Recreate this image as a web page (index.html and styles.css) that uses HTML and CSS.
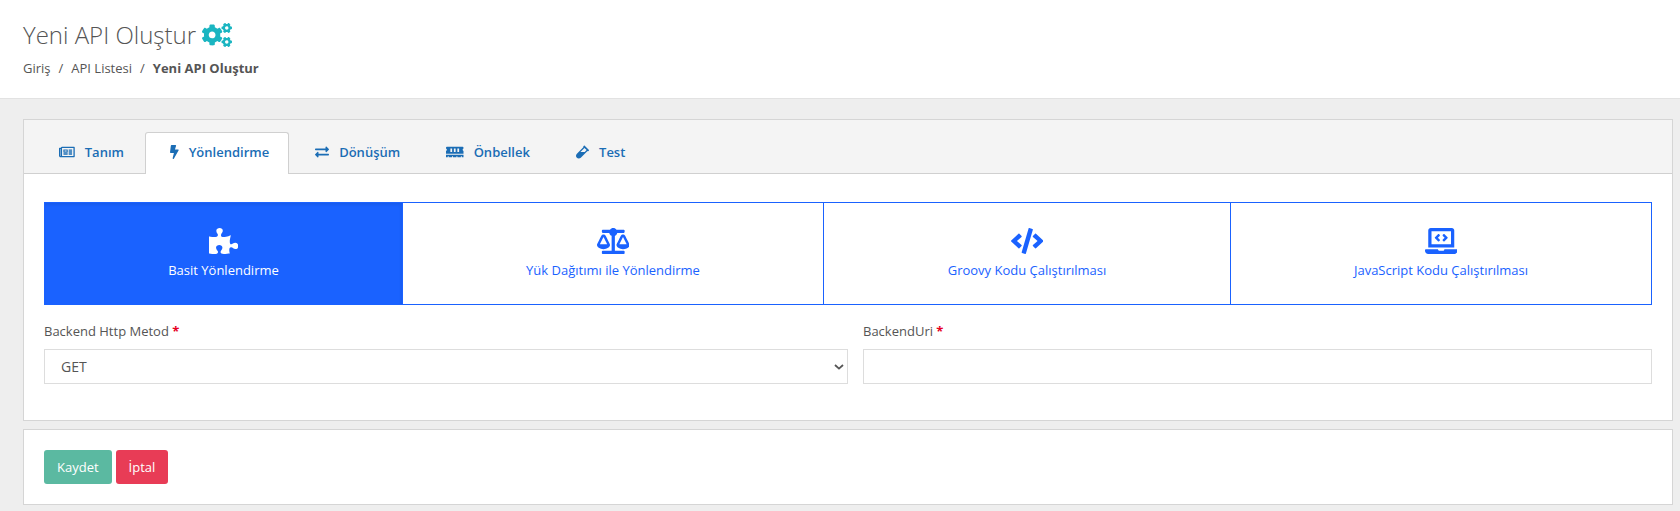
FILE: index.html
```html
<!DOCTYPE html>
<html lang="tr">

<head>
    <meta charset="UTF-8">
    <meta name="viewport" content="width=device-width, initial-scale=1.0">
    <title>Yeni API Oluştur</title>
    <link rel="stylesheet" href="styles.css">
</head>

<body>
    <header class="page-header">
        <h1 class="page-title">
            Yeni API Oluştur
            <svg class="title-icon" viewBox="0 0 640 512"><path d="M512.1 191l-8.2 14.3c-3 5.3-9.4 7.5-15.1 5.4-11.8-4.4-22.6-10.7-32.1-18.6-4.6-3.8-5.8-10.5-2.8-15.7l8.2-14.3c-6.9-8-12.3-17.3-15.9-27.4h-16.5c-6 0-11.2-4.3-12.2-10.3-2-12-2.1-24.6 0-37.1 1-6 6.2-10.4 12.2-10.4h16.5c3.6-10.1 9-19.4 15.9-27.4l-8.2-14.3c-3-5.2-1.9-11.9 2.8-15.7 9.5-7.9 20.4-14.2 32.1-18.6 5.7-2.1 12.1.1 15.1 5.4l8.2 14.3c10.5-1.9 21.2-1.9 31.7 0L552 6.3c3-5.3 9.4-7.5 15.1-5.4 11.8 4.4 22.6 10.7 32.1 18.6 4.6 3.8 5.8 10.5 2.8 15.7l-8.2 14.3c6.9 8 12.3 17.3 15.9 27.4h16.5c6 0 11.2 4.3 12.2 10.3 2 12 2.1 24.6 0 37.1-1 6-6.2 10.4-12.2 10.4h-16.5c-3.6 10.1-9 19.4-15.9 27.4l8.2 14.3c3 5.2 1.9 11.9-2.8 15.7-9.5 7.9-20.4 14.2-32.1 18.6-5.7 2.1-12.1-.1-15.1-5.4l-8.2-14.3c-10.4 1.9-21.2 1.9-31.7 0zm-10.5-58.8c38.5 29.6 82.4-14.3 52.8-52.8-38.5-29.7-82.4 14.3-52.8 52.8zM386.3 286.1l33.7 16.8c10.1 5.8 14.5 18.1 10.5 29.1-8.9 24.2-26.4 46.4-42.6 65.8-7.4 8.9-20.2 11.1-30.3 5.3l-29.1-16.8c-16 13.7-34.6 24.6-54.9 31.7v33.6c0 11.6-8.3 21.6-19.7 23.6-24.6 4.2-50.4 4.4-75.9 0-11.5-2-20-11.9-20-23.6V418c-20.3-7.2-38.9-18-54.9-31.7L74 403c-10 5.8-22.9 3.6-30.3-5.3-16.2-19.4-33.3-41.6-42.2-65.7-4-10.9.4-23.2 10.5-29.1l33.3-16.8c-3.9-20.9-3.9-42.4 0-63.4L12 205.8c-10.1-5.8-14.6-18.1-10.5-29 8.9-24.2 26-46.4 42.2-65.8 7.4-8.9 20.2-11.1 30.3-5.3l29.1 16.8c16-13.7 34.6-24.6 54.9-31.7V57.1c0-11.5 8.2-21.5 19.6-23.5 24.6-4.2 50.5-4.4 76-.1 11.5 2 20 11.9 20 23.6v33.6c20.3 7.2 38.9 18 54.9 31.7l29.1-16.8c10-5.8 22.9-3.6 30.3 5.3 16.2 19.4 33.2 41.6 42.1 65.8 4 10.9.1 23.2-10 29.1l-33.7 16.8c3.9 21 3.9 42.5 0 63.5zm-117.6 21.1c59.2-77-28.7-164.9-105.7-105.7-59.2 77 28.7 164.9 105.7 105.7zm243.4 182.7l-8.2 14.3c-3 5.3-9.4 7.5-15.1 5.4-11.8-4.4-22.6-10.7-32.1-18.6-4.6-3.8-5.8-10.5-2.8-15.7l8.2-14.3c-6.9-8-12.3-17.3-15.9-27.4h-16.5c-6 0-11.2-4.3-12.2-10.3-2-12-2.1-24.6 0-37.1 1-6 6.2-10.4 12.2-10.4h16.5c3.6-10.1 9-19.4 15.9-27.4l-8.2-14.3c-3-5.2-1.9-11.9 2.8-15.7 9.5-7.9 20.4-14.2 32.1-18.6 5.7-2.1 12.1.1 15.1 5.4l8.2 14.3c10.5-1.9 21.2-1.9 31.7 0l8.2-14.3c3-5.3 9.4-7.5 15.1-5.4 11.8 4.4 22.6 10.7 32.1 18.6 4.6 3.8 5.8 10.5 2.8 15.7l-8.2 14.3c6.9 8 12.3 17.3 15.9 27.4h16.5c6 0 11.2 4.3 12.2 10.3 2 12 2.1 24.6 0 37.1-1 6-6.2 10.4-12.2 10.4h-16.5c-3.6 10.1-9 19.4-15.9 27.4l8.2 14.3c3 5.2 1.9 11.9-2.8 15.7-9.5 7.9-20.4 14.2-32.1 18.6-5.7 2.1-12.1-.1-15.1-5.4l-8.2-14.3c-10.4 1.9-21.2 1.9-31.7 0zM501.6 431c38.5 29.6 82.4-14.3 52.8-52.8-38.5-29.6-82.4 14.3-52.8 52.8z"/></svg>
        </h1>
        <nav class="breadcrumb">
            <a>Giriş</a>
            <span class="sep">/</span>
            <a>API Listesi</a>
            <span class="sep">/</span>
            <strong>Yeni API Oluştur</strong>
        </nav>
    </header>

    <main class="page-content">
        <section class="card">
            <ul class="tabs">
                <li class="tab">
                    <svg class="tab-icon" viewBox="0 0 576 512"><path d="M552 64H112c-20.858 0-38.643 13.377-45.248 32H24c-13.255 0-24 10.745-24 24v272c0 30.928 25.072 56 56 56h496c13.255 0 24-10.745 24-24V88c0-13.255-10.745-24-24-24zM48 392V144h16v248c0 4.411-3.589 8-8 8s-8-3.589-8-8zm480 8H111.422c.374-2.614.578-5.283.578-8V112h416v288zM172 280h136c6.627 0 12-5.373 12-12v-96c0-6.627-5.373-12-12-12H172c-6.627 0-12 5.373-12 12v96c0 6.627 5.373 12 12 12zm28-80h80v40h-80v-40zm-40 140v-24c0-6.627 5.373-12 12-12h136c6.627 0 12 5.373 12 12v24c0 6.627-5.373 12-12 12H172c-6.627 0-12-5.373-12-12zm192 0v-24c0-6.627 5.373-12 12-12h104c6.627 0 12 5.373 12 12v24c0 6.627-5.373 12-12 12H364c-6.627 0-12-5.373-12-12zm0-144v-24c0-6.627 5.373-12 12-12h104c6.627 0 12 5.373 12 12v24c0 6.627-5.373 12-12 12H364c-6.627 0-12-5.373-12-12zm0 72v-24c0-6.627 5.373-12 12-12h104c6.627 0 12 5.373 12 12v24c0 6.627-5.373 12-12 12H364c-6.627 0-12-5.373-12-12z"/></svg>
                    Tanım
                </li>
                <li class="tab active">
                    <svg class="tab-icon" viewBox="0 0 320 512"><path d="M296 160H180.6l42.6-129.8C227.2 15 215.7 0 200 0H56C44 0 33.8 8.9 32.2 20.8l-32 240C-1.7 275.2 9.5 288 24 288h118.7L96.6 482.5c-3.6 15.2 8 29.5 23.3 29.5 8.4 0 16.4-4.4 20.8-12l176-304c9.3-15.9-2.2-36-20.7-36z"/></svg>
                    Yönlendirme
                </li>
                <li class="tab">
                    <svg class="tab-icon" viewBox="0 0 512 512"><path d="M0 168v-16c0-13.255 10.745-24 24-24h360V80c0-21.367 25.899-32.042 40.971-16.971l80 80c9.372 9.373 9.372 24.569 0 33.941l-80 80C409.956 271.982 384 261.456 384 240v-48H24c-13.255 0-24-10.745-24-24zm488 152H128v-48c0-21.314-25.862-32.08-40.971-16.971l-80 80c-9.372 9.373-9.372 24.569 0 33.941l80 80C102.057 463.997 128 453.437 128 432v-48h360c13.255 0 24-10.745 24-24v-16c0-13.255-10.745-24-24-24z"/></svg>
                    Dönüşüm
                </li>
                <li class="tab">
                    <svg class="tab-icon" viewBox="0 0 640 512"><path d="M640 130.94V96c0-17.67-14.33-32-32-32H32C14.33 64 0 78.33 0 96v34.94c18.6 6.61 32 24.19 32 45.06s-13.4 38.45-32 45.06V320h640v-98.94c-18.6-6.61-32-24.19-32-45.06s13.4-38.45 32-45.06zM224 256h-64V128h64v128zm128 0h-64V128h64v128zm128 0h-64V128h64v128zM0 448h64v-26.67c0-8.84 7.16-16 16-16s16 7.16 16 16V448h128v-26.67c0-8.84 7.16-16 16-16s16 7.16 16 16V448h128v-26.67c0-8.84 7.16-16 16-16s16 7.16 16 16V448h128v-26.67c0-8.84 7.16-16 16-16s16 7.16 16 16V448h64v-96H0v96z"/></svg>
                    Önbellek
                </li>
                <li class="tab">
                    <svg class="tab-icon" viewBox="0 0 480 512"><path d="M477.7 186.1L309.5 18.3c-3.1-3.1-8.2-3.1-11.3 0l-34 33.9c-3.1 3.1-3.1 8.2 0 11.3l11.2 11.1L33 316.5c-38.8 38.7-45.1 102-9.4 143.5 20.6 24 49.5 36 78.4 35.9 26.4 0 52.8-10 72.9-30.1l246.3-245.7 11.2 11.1c3.1 3.1 8.2 3.1 11.3 0l34-33.9c3.1-3 3.1-8.1 0-11.2zM318 256H161l148-147.7 78.5 78.3L318 256z"/></svg>
                    Test
                </li>
            </ul>

            <div class="tab-body">
                <div class="route-types">
                    <div class="route-type active">
                        <svg class="route-icon" viewBox="0 0 576 512"><path d="M519.442 288.651c-41.519 0-59.5 31.593-82.058 31.593C377.409 320.244 432 144 432 144s-196.288 80-196.288-3.297c0-35.827 36.288-46.25 36.288-85.985C272 19.216 243.885 0 210.539 0c-34.654 0-66.366 18.891-66.366 56.346 0 41.364 31.711 59.277 31.711 81.75C175.885 207.719 0 166.758 0 166.758v333.237s178.635 41.047 178.635-28.662c0-22.473-40-40.107-40-81.471 0-37.456 29.25-56.346 63.577-56.346 33.673 0 61.788 19.216 61.788 54.717 0 39.735-36.288 50.158-36.288 85.985 0 60.803 129.675 25.73 181.23 25.73 0 0-34.725-120.101 25.827-120.101 35.962 0 46.423 36.152 86.308 36.152C556.712 416 576 387.99 576 354.443c0-34.199-18.962-65.792-56.558-65.792z"/></svg>
                        <span>Basit Yönlendirme</span>
                    </div>
                    <div class="route-type">
                        <svg class="route-icon" viewBox="0 0 640 512"><path d="M256 336h-.02c0-16.18 1.34-8.73-85.05-181.51-17.65-35.29-68.19-35.36-85.87 0C-2.06 328.75.02 320.33.02 336H0c0 44.18 57.31 80 128 80s128-35.82 128-80zM128 176l72 144H56l72-144zm511.98 160c0-16.18 1.34-8.73-85.05-181.51-17.65-35.29-68.19-35.36-85.87 0-87.12 174.26-85.04 165.84-85.04 181.51H384c0 44.18 57.31 80 128 80s128-35.82 128-80h-.02zM440 320l72-144 72 144H440zm88 128H352V153.25c23.51-10.29 41.16-31.48 46.39-57.25H528c8.84 0 16-7.16 16-16V48c0-8.84-7.16-16-16-16H383.64C369.04 12.68 346.09 0 320 0s-49.04 12.68-63.64 32H112c-8.84 0-16 7.16-16 16v32c0 8.84 7.16 16 16 16h129.61c5.23 25.76 22.87 46.96 46.39 57.25V448H112c-8.84 0-16 7.16-16 16v32c0 8.84 7.16 16 16 16h416c8.84 0 16-7.16 16-16v-32c0-8.84-7.16-16-16-16z"/></svg>
                        <span>Yük Dağıtımı ile Yönlendirme</span>
                    </div>
                    <div class="route-type">
                        <svg class="route-icon" viewBox="0 0 640 512"><path d="M278.9 511.5l-61-17.7c-6.4-1.8-10-8.5-8.2-14.9L346.2 8.7c1.8-6.4 8.5-10 14.9-8.2l61 17.7c6.4 1.8 10 8.5 8.2 14.9L293.8 503.3c-1.9 6.4-8.5 10.1-14.9 8.2zm-114-112.2l43.5-46.4c4.6-4.9 4.3-12.7-.8-17.2L117 256l90.6-79.7c5.1-4.5 5.5-12.3.8-17.2l-43.5-46.4c-4.5-4.8-12.1-5.1-17-.5L3.8 247.2c-5.1 4.7-5.1 12.8 0 17.5l144.1 135.1c4.9 4.6 12.5 4.4 17-.5zm327.2.6l144.1-135.1c5.1-4.7 5.1-12.8 0-17.5L492.1 112.1c-4.8-4.5-12.4-4.3-17 .5L431.6 159c-4.6 4.9-4.3 12.7.8 17.2L523 256l-90.6 79.7c-5.1 4.5-5.5 12.3-.8 17.2l43.5 46.4c4.5 4.9 12.1 5.1 17 .6z"/></svg>
                        <span>Groovy Kodu Çalıştırılması</span>
                    </div>
                    <div class="route-type">
                        <svg class="route-icon" viewBox="0 0 640 512"><path d="M255.03 261.65c6.25 6.25 16.38 6.25 22.63 0l11.31-11.31c6.25-6.25 6.25-16.38 0-22.63L253.25 192l35.71-35.72c6.25-6.25 6.25-16.38 0-22.63l-11.31-11.31c-6.25-6.25-16.38-6.25-22.63 0l-58.34 58.34c-6.25 6.25-6.25 16.38 0 22.63l58.35 58.34zm96.01-11.3l11.31 11.31c6.25 6.25 16.38 6.25 22.63 0l58.34-58.34c6.25-6.25 6.25-16.38 0-22.63l-58.34-58.34c-6.25-6.25-16.38-6.25-22.63 0l-11.31 11.31c-6.25 6.25-6.25 16.38 0 22.63L386.75 192l-35.71 35.72c-6.25 6.25-6.25 16.38 0 22.63zM624 416H381.54c-.74 19.81-14.71 32-32.74 32H288c-18.69 0-33.02-17.47-32.77-32H16c-8.8 0-16 7.2-16 16v16c0 35.2 28.8 64 64 64h512c35.2 0 64-28.8 64-64v-16c0-8.8-7.2-16-16-16zM576 48c0-26.4-21.6-48-48-48H112C85.6 0 64 21.6 64 48v336h512V48zm-64 272H128V64h384v256z"/></svg>
                        <span>JavaScript Kodu Çalıştırılması</span>
                    </div>
                </div>

                <form class="route-form">
                    <div class="field">
                        <label for="method">Backend Http Metod <span class="req">*</span></label>
                        <div class="select-wrap">
                            <select id="method" class="control">
                                <option>GET</option>
                                <option>POST</option>
                                <option>PUT</option>
                                <option>DELETE</option>
                            </select>
                            <svg class="select-arrow" viewBox="0 0 10 6"><path d="M1 1l4 3.6L9 1" /></svg>
                        </div>
                    </div>
                    <div class="field">
                        <label for="backendUri">BackendUri <span class="req">*</span></label>
                        <input id="backendUri" class="control" type="text">
                    </div>
                </form>
            </div>
        </section>

        <section class="card actions">
            <button class="btn btn-save" type="button">Kaydet</button>
            <button class="btn btn-cancel" type="button">İptal</button>
        </section>
    </main>
</body>

</html>
```

FILE: styles.css
```css
* {
    margin: 0;
    padding: 0;
    box-sizing: border-box;
}

body {
    font-family: "Open Sans", "Liberation Sans", sans-serif;
    font-size: 13px;
    color: #555;
    background-color: #eee;
}

.page-header {
    height: 99px;
    padding: 18px 23px 0;
    background-color: #fff;
    border-bottom: 1px solid #e2e2e2;
}

.page-title {
    display: flex;
    align-items: center;
    gap: 6px;
    height: 33px;
    font-size: 24px;
    font-weight: 300;
    line-height: 33px;
}

.title-icon {
    width: 30px;
    height: 24px;
    fill: #1ab5c1;
}

.breadcrumb {
    display: flex;
    margin-top: 8px;
    line-height: 18px;
}

.breadcrumb .sep {
    margin: 0 8px;
}

.page-content {
    padding: 20px 7px 7px 23px;
}

.card {
    background-color: #fff;
    border: 1px solid #d5d5d5;
}

.tabs {
    display: flex;
    gap: 1px;
    height: 54px;
    padding: 12px 0 0 10px;
    list-style: none;
    background-color: #f4f4f4;
    border-bottom: 1px solid #d0d0d0;
}

.tab {
    display: flex;
    align-items: center;
    gap: 10px;
    height: 41px;
    padding: 0 19px 3px 24px;
    font-size: 13px;
    font-weight: 600;
    color: #1b6db5;
    border: 1px solid transparent;
    border-bottom: 0;
}

.tab.active {
    height: 42px;
    background-color: #fff;
    border-color: #d0d0d0;
    border-radius: 3px 3px 0 0;
}

.tab-icon {
    height: 14px;
    fill: currentColor;
}

.tab-body {
    padding: 28px 20px 36px;
}

.route-types {
    display: grid;
    grid-template-columns: 359px 421px 407px 1fr;
    height: 103px;
}

.route-type {
    display: flex;
    flex-direction: column;
    align-items: center;
    padding-top: 25px;
    color: #1a62ff;
    border: 1px solid #1a62ff;
    border-left: 0;
}

.route-type:first-child {
    border-left: 1px solid #1a62ff;
}

.route-type.active {
    color: #fff;
    background-color: #1a62ff;
    box-shadow: inset -1px 2px 3px rgba(0, 0, 0, 0.08);
}

.route-icon {
    height: 26px;
    fill: currentColor;
}

.route-type span {
    margin-top: 7px;
    line-height: 18px;
}

.route-form {
    display: grid;
    grid-template-columns: 804px 1fr;
    gap: 15px;
    margin-top: 16px;
}

.field label {
    display: block;
    margin-bottom: 8px;
    font-size: 13px;
    line-height: 20px;
}

.req {
    font-weight: 700;
    color: #e6001f;
}

.select-wrap {
    position: relative;
}

.control {
    display: block;
    width: 100%;
    height: 35px;
    padding: 0 16px;
    font-family: inherit;
    font-size: 14px;
    color: #555;
    background-color: #fff;
    border: 1px solid #ddd;
    border-radius: 0;
    appearance: none;
}

.select-arrow {
    position: absolute;
    top: 15px;
    right: 4px;
    width: 10px;
    height: 6px;
    fill: none;
    stroke: #555;
    stroke-width: 1.8;
}

.actions {
    display: flex;
    gap: 4px;
    height: 76px;
    margin-top: 8px;
    padding: 20px;
}

.btn {
    height: 34px;
    padding: 0 13px;
    font-family: inherit;
    font-size: 13px;
    color: #fff;
    border: 0;
    border-radius: 3px;
}

.btn-save {
    background-color: #5bb9a1;
}

.btn-cancel {
    background-color: #e83c56;
}
```
